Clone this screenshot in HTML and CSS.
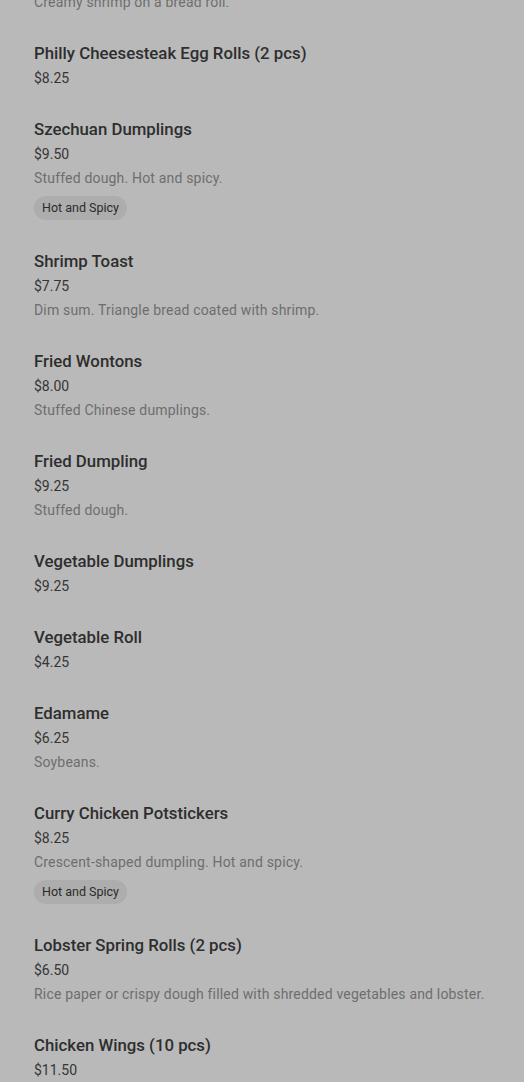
FILE: index.html
```html
<!DOCTYPE html>
<html>
<head>
<meta charset="utf-8">
<link rel="stylesheet" href="styles.css">
</head>
<body>
<div class="list">
  <div class="item first">
    <div class="desc">Creamy shrimp on a bread roll.</div>
  </div>
  <div class="item">
    <div class="title">Philly Cheesesteak Egg Rolls (2 pcs)</div>
    <div class="price">$8.25</div>
  </div>
  <div class="item">
    <div class="title">Szechuan Dumplings</div>
    <div class="price">$9.50</div>
    <div class="desc">Stuffed dough. Hot and spicy.</div>
    <div class="tags"><span class="tag">Hot and Spicy</span></div>
  </div>
  <div class="item">
    <div class="title">Shrimp Toast</div>
    <div class="price">$7.75</div>
    <div class="desc">Dim sum. Triangle bread coated with shrimp.</div>
  </div>
  <div class="item">
    <div class="title">Fried Wontons</div>
    <div class="price">$8.00</div>
    <div class="desc">Stuffed Chinese dumplings.</div>
  </div>
  <div class="item">
    <div class="title">Fried Dumpling</div>
    <div class="price">$9.25</div>
    <div class="desc">Stuffed dough.</div>
  </div>
  <div class="item">
    <div class="title">Vegetable Dumplings</div>
    <div class="price">$9.25</div>
  </div>
  <div class="item">
    <div class="title">Vegetable Roll</div>
    <div class="price">$4.25</div>
  </div>
  <div class="item">
    <div class="title">Edamame</div>
    <div class="price">$6.25</div>
    <div class="desc">Soybeans.</div>
  </div>
  <div class="item">
    <div class="title">Curry Chicken Potstickers</div>
    <div class="price">$8.25</div>
    <div class="desc">Crescent-shaped dumpling. Hot and spicy.</div>
    <div class="tags"><span class="tag">Hot and Spicy</span></div>
  </div>
  <div class="item">
    <div class="title">Lobster Spring Rolls (2 pcs)</div>
    <div class="price">$6.50</div>
    <div class="desc">Rice paper or crispy dough filled with shredded vegetables and lobster.</div>
  </div>
  <div class="item">
    <div class="title">Chicken Wings (10 pcs)</div>
    <div class="price">$11.50</div>
  </div>
</div>
</body>
</html>
```
FILE: styles.css
```css
html, body {
  margin: 0;
  padding: 0;
  background: #b9b9b9;
  height: 100%;
  overflow: hidden;
}
body {
  font-family: Roboto, "Liberation Sans", sans-serif;
}
.list {
  margin-top: -10px;
  padding: 0 34px;
  display: flex;
  flex-direction: column;
  gap: 27px;
}
.item {
  display: flex;
  flex-direction: column;
}
.title {
  font-size: 16.8px;
  font-weight: 500;
  line-height: 24px;
  color: #2e2e2e;
  margin-bottom: 1px;
}
.price {
  font-size: 14px;
  line-height: 24px;
  color: #353535;
}
.desc {
  font-size: 14px;
  line-height: 24px;
  color: #6e6e6e;
  letter-spacing: 0.18px;
}
.tags {
  display: flex;
  margin-top: 6px;
  margin-bottom: 2px;
}
.tag {
  background: #adadad;
  color: #2b2b2b;
  font-size: 12.5px;
  font-weight: 400;
  line-height: 24px;
  padding: 0 8px;
  border-radius: 12px;
}
```
